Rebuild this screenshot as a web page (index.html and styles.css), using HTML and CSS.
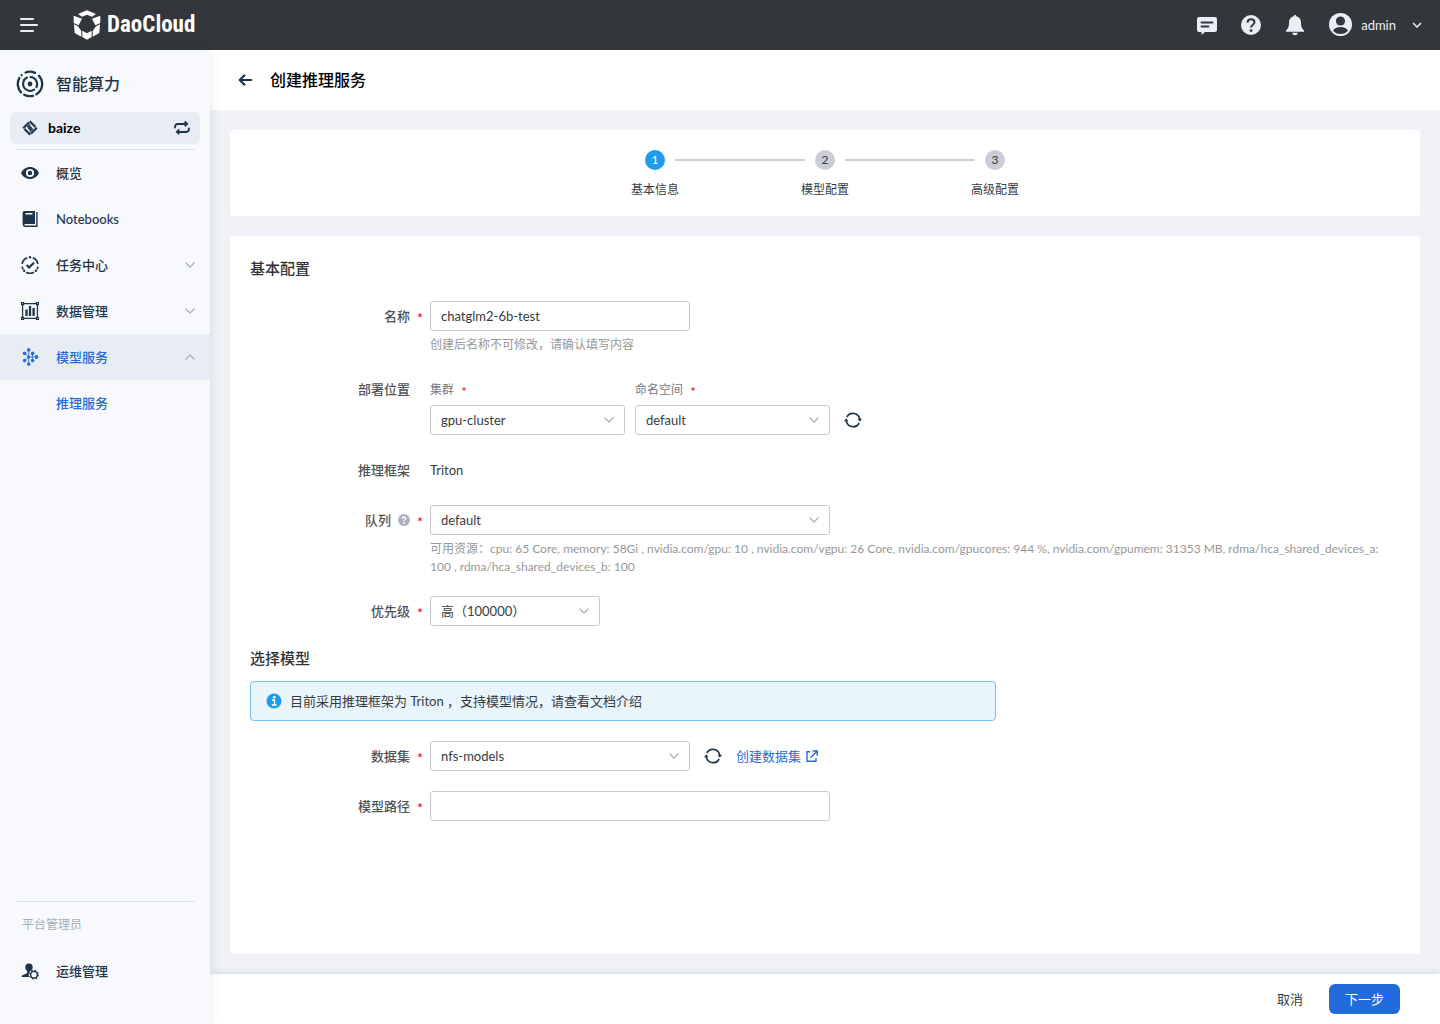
FILE: index.html
```html
<!DOCTYPE html>
<html lang="zh-CN">
<head>
<meta charset="utf-8">
<meta name="viewport" content="width=device-width, initial-scale=1">
<title>创建推理服务 - DaoCloud</title>
<link rel="stylesheet" href="styles.css">
</head>
<body>
<header class="topbar">
  <button class="icon-btn menu-btn" type="button" aria-label="菜单">
    <svg width="18" height="16" viewBox="0 0 18 16" fill="none" stroke="currentColor" stroke-width="2" stroke-linecap="round"><path d="M1 2h12M1 8h16M1 14h12"/></svg>
  </button>
  <a class="brand" href="#">
    <svg width="28" height="30" viewBox="0 0 84 90" fill="currentColor" aria-hidden="true">
      <path d="M42 1 69 12 57 20 42 14 27 20 15 12Z"/>
      <path d="M2 17 27 26 17 46 2 39Z"/><path d="M82 17 57 26 67 46 82 39Z"/>
      <path d="M3 43 15 49 25 63V80L5 69Z"/><path d="M81 43 69 49 59 63V80L79 69Z"/>
      <path d="M28 62 42 70 56 62V81L42 89 28 81Z"/>
    </svg>
    <span class="brand-name">DaoCloud</span>
  </a>
  <nav class="top-actions" aria-label="工具">
    <button class="icon-btn" type="button" aria-label="消息">
      <svg width="20" height="20" viewBox="0 0 20 20"><path fill="currentColor" d="M2 2h16a2 2 0 0 1 2 2v11a2 2 0 0 1-2 2H8l-3.500 3V17H2a2 2 0 0 1-2-2V4a2 2 0 0 1 2-2Z"/><path d="M4.500 7.500h11M4.500 11.500h7" stroke="#33363b" stroke-width="1.800" stroke-linecap="round"/></svg>
    </button>
    <button class="icon-btn" type="button" aria-label="帮助">
      <svg width="20" height="20" viewBox="0 0 20 20"><circle cx="10" cy="10" r="10" fill="currentColor"/><path d="M6.500 7.600c.1-2.100 1.500-3.300 3.500-3.300s3.500 1.200 3.500 3c0 2.400-3.500 2.500-3.500 5.200" fill="none" stroke="#33363b" stroke-width="2"/><circle cx="10" cy="15.600" r="1.400" fill="#33363b"/></svg>
    </button>
    <button class="icon-btn" type="button" aria-label="通知">
      <svg width="20" height="22" viewBox="0 0 20 22" fill="currentColor"><path d="M10 1c.8 0 1.300.5 1.300 1.300 3 .7 4.700 3 4.700 6.200 0 4.500 1 6.200 3 7.800v1.500H1v-1.500c2-1.600 3-3.300 3-7.800 0-3.200 1.700-5.500 4.700-6.200C8.700 1.500 9.200 1 10 1ZM7.200 18.800h5.600C12.500 20.500 11.500 21.300 10 21.300s-2.500-.8-2.800-2.500Z"/></svg>
    </button>
    <button class="icon-btn user-btn" type="button">
      <svg width="24" height="24" viewBox="0 0 24 24"><circle cx="11.500" cy="11.500" r="11.500" fill="currentColor"/><circle cx="11.500" cy="8" r="4.600" fill="#33363b"/><path d="M4.100 17.700c1-2.200 3.800-3.600 7.400-3.600s6.400 1.400 7.400 3.600c-1.700 2-4.300 3.300-7.400 3.300s-5.700-1.300-7.400-3.300Z" fill="#33363b"/></svg>
      <span class="user-name">admin</span>
      <svg width="10" height="6" viewBox="0 0 10 6" fill="none" stroke="currentColor" stroke-width="1.500"><path d="m1 1 4 4 4-4"/></svg>
    </button>
  </nav>
</header>

<div class="shell">
  <aside class="sidebar">
    <div class="product">
      <svg width="28" height="28" viewBox="0 0 28 28" fill="none" stroke="currentColor" stroke-linecap="round" aria-hidden="true">
        <circle cx="14" cy="14" r="2.400" fill="currentColor" stroke="none"/>
        <path stroke-width="2.300" d="M9.600 2.500A12.200 12.200 0 0 1 19 2.900M23 5.800A12.200 12.200 0 0 1 20.500 24.300M17 25.800A12.200 12.200 0 0 1 8.200 24.700M5 22.300A12.200 12.200 0 0 1 3.400 8M5.600 5.200v.1"/>
        <path stroke-width="2.100" d="M14.500 7A7.100 7.100 0 0 1 20.400 17.200M18.200 19.700A7.100 7.100 0 1 1 11 7.500"/>
      </svg>
      <span>智能算力</span>
    </div>
    <button class="workspace" type="button">
      <svg width="16" height="16" viewBox="0 0 16 16" fill="none" stroke="currentColor" stroke-width="2.200" aria-hidden="true"><path d="M1.200 8.300 7 2.500M7.700 1.200l5.800 5.800M14.800 7.700 9 13.500M8.300 14.800 2.500 9"/><path d="M5.200 7.300 8 4.500M10.800 8.700 8 11.500" stroke-width="1.400"/><path d="m8 5.800 2.200 2.200L8 10.200 5.800 8Z" fill="currentColor" stroke-width=".6"/></svg>
      <span class="workspace-name">baize</span>
      <svg width="16" height="14" viewBox="0 0 16 14" fill="none" stroke="currentColor" stroke-width="1.800" stroke-linecap="round" aria-hidden="true"><path d="M1 6.500Q1 3 4 3h8M15 7.500Q15 11 12 11H4"/><path d="M11 .6v4.800L13.800 3ZM5 8.600v4.800L2.200 11Z" fill="currentColor" stroke-width="1" stroke-linejoin="round"/></svg>
    </button>
    <nav class="nav" aria-label="主导航">
      <a class="nav-item" href="#">
        <svg width="18" height="18" viewBox="0 0 18 18"><path fill="currentColor" fill-rule="evenodd" d="M9 3c4 0 7.300 2.500 9 6-1.700 3.500-5 6-9 6s-7.300-2.500-9-6c1.700-3.500 5-6 9-6Zm0 1.900a4.100 4.100 0 1 0 0 8.200 4.100 4.100 0 0 0 0-8.200Zm0 1.900a2.200 2.200 0 1 1 0 4.400 2.200 2.200 0 0 1 0-4.400Z"/></svg>
        <span class="nav-text">概览</span>
      </a>
      <a class="nav-item" href="#">
        <svg width="18" height="18" viewBox="0 0 18 18"><path fill="currentColor" fill-rule="evenodd" d="M3.500 1H14v13H4.200a.8.800 0 0 0 0 1.600H15.200V2H16.600v15H4a2.500 2.500 0 0 1-2.400-2.500V3A2 2 0 0 1 3.500 1Zm1 2v1.600h7V3Z"/></svg>
        <span class="nav-text">Notebooks</span>
      </a>
      <a class="nav-item" href="#">
        <svg width="18" height="18" viewBox="0 0 18 18" fill="none" stroke="currentColor"><path d="M11.800 1.700A8 8 0 0 1 16.900 8M16.900 10.600a8 8 0 0 1-1 2.700M12.900 16.300a8 8 0 0 1-7.800 0M2.100 13.300a8 8 0 0 1-1-2.700M1.100 8A8 8 0 0 1 6.200 1.700" stroke-width="1.700"/><g fill="currentColor" stroke="none"><circle cx="9" cy="1.200" r="1.200"/><circle cx="14.900" cy="14.700" r="1.200"/><circle cx="3.100" cy="14.700" r="1.200"/></g><path d="m5.600 9 2.500 2.500L13 6.700" stroke-width="2.200"/></svg>
        <span class="nav-text">任务中心</span>
        <svg class="caret" width="10" height="6" viewBox="0 0 10 6"><path d="M.5.500 5 5 9.500.5"/></svg>
      </a>
      <a class="nav-item" href="#">
        <svg width="18" height="18" viewBox="0 0 18 18" fill="none" stroke="currentColor" stroke-width="1.200"><path d="M3 1.600h12M3 16.400h12M1.600 3v12M16.400 3v12"/><path d="M.6.600h2v2h-2ZM15.400.600h2v2h-2ZM.6 15.400h2v2h-2ZM15.400 15.400h2v2h-2Z"/><path d="M5.500 7.500V14M9 4v10M12.600 6v8" stroke-width="2.300"/></svg>
        <span class="nav-text">数据管理</span>
        <svg class="caret" width="10" height="6" viewBox="0 0 10 6"><path d="M.5.500 5 5 9.500.5"/></svg>
      </a>
      <a class="nav-item active" href="#">
        <svg width="18" height="18" viewBox="0 0 18 18" fill="currentColor"><path d="M7.700 2v14M4 5.500l3.700 3.500L4 12.500M11.400 5.500v7M7.700 9h7.500" stroke="currentColor" stroke-width=".9" fill="none"/><circle cx="7.700" cy="1.900" r="1.800"/><circle cx="3.600" cy="5.400" r="1.800"/><circle cx="11.600" cy="5.400" r="1.800"/><circle cx="7.700" cy="9" r="1.500"/><circle cx="15.500" cy="9" r="1.900"/><circle cx="3.600" cy="12.600" r="1.800"/><circle cx="11.600" cy="12.600" r="1.800"/><circle cx="7.700" cy="16.100" r="1.800"/></svg>
        <span class="nav-text">模型服务</span>
        <svg class="caret" width="10" height="6" viewBox="0 0 10 6"><path d="M.5 5.500 5 1l4.500 4.500"/></svg>
      </a>
      <a class="nav-item nav-sub" href="#"><span class="nav-text">推理服务</span></a>
    </nav>
    <div class="admin">
      <p class="admin-title">平台管理员</p>
      <a class="nav-item" href="#">
        <svg width="18" height="18" viewBox="0 0 18 18"><path fill="currentColor" d="M8 1.500a3.700 3.700 0 0 1 3.700 3.800c0 1-.3 2-1 2.900-1.800.8-3 2.500-3 4.500 0 .9.200 1.700.6 2.400H.7v-1.400c1-.9 5-1.800 5.400-3V9C5 8.300 4.300 6.900 4.300 5.300A3.700 3.700 0 0 1 8 1.500Z"/><circle cx="13" cy="12.700" r="3.300" fill="none" stroke="currentColor" stroke-width="1.400"/><circle cx="13" cy="12.700" r="4.300" fill="none" stroke="currentColor" stroke-width="1.200" stroke-dasharray="1.600 1.777"/></svg>
        <span class="nav-text">运维管理</span>
      </a>
    </div>
  </aside>

  <main class="main">
    <div class="page-head">
      <a class="back" href="#" aria-label="返回"><svg width="14" height="12" viewBox="0 0 14 12" fill="none" stroke="currentColor" stroke-width="2.200"><path d="M14 6H2M7 .8 1.800 6 7 11.200"/></svg></a>
      <h1 class="page-title">创建推理服务</h1>
    </div>

    <div class="content">
      <section class="card steps-card">
        <ol class="steps">
          <li class="step current"><span class="step-num">1</span><span class="step-name">基本信息</span></li>
          <li class="step-line" aria-hidden="true"></li>
          <li class="step"><span class="step-num">2</span><span class="step-name">模型配置</span></li>
          <li class="step-line" aria-hidden="true"></li>
          <li class="step"><span class="step-num">3</span><span class="step-name">高级配置</span></li>
        </ol>
      </section>

      <form class="card form-card" id="service-form">
        <h2 class="section-title">基本配置</h2>
        <div class="rows">
          <div class="row">
            <label class="label required" for="name">名称</label>
            <div class="field">
              <input class="control w-260" id="name" type="text" value="chatglm2-6b-test">
              <p class="hint">创建后名称不可修改，请确认填写内容</p>
            </div>
          </div>
          <div class="row">
            <span class="label">部署位置</span>
            <div class="field inline bottom">
              <div class="sub-field">
                <label class="sub-label required" for="cluster">集群</label>
                <select class="control w-195" id="cluster"><option>gpu-cluster</option></select>
              </div>
              <div class="sub-field">
                <label class="sub-label required" for="namespace">命名空间</label>
                <select class="control w-195" id="namespace"><option>default</option></select>
              </div>
              <button class="refresh" type="button" aria-label="刷新"><svg width="18" height="16" viewBox="0 0 18 16" fill="none" stroke="currentColor" stroke-width="1.700"><path d="M2.900 5A6.800 6.800 0 0 1 15.700 7.500M15.100 11A6.800 6.800 0 0 1 2.300 8.500"/><path d="M0 9.200 2.200 6.200 4.400 9.200ZM13.600 6.800H18L15.800 9.800Z" fill="currentColor" stroke="none"/></svg></button>
            </div>
          </div>
          <div class="row">
            <span class="label">推理框架</span>
            <div class="field"><span class="plain">Triton</span></div>
          </div>
          <div class="row">
            <label class="label required" for="queue">队列
              <svg class="tip" width="12" height="12" viewBox="0 0 12 12" aria-hidden="true"><circle cx="6" cy="6" r="6" fill="#abb1bd"/><path d="M4.200 4.700c0-1.100.7-1.700 1.800-1.700s1.800.6 1.800 1.500C7.800 5.800 6 5.800 6 7.300" fill="none" stroke="#fff" stroke-width="1.300"/><circle cx="6" cy="9" r=".9" fill="#fff"/></svg>
            </label>
            <div class="field">
              <select class="control w-400" id="queue"><option>default</option></select>
              <p class="hint">可用资源：cpu: 65 Core, memory: 58Gi , nvidia.com/gpu: 10 , nvidia.com/vgpu: 26 Core, nvidia.com/gpucores: 944 %, nvidia.com/gpumem: 31353 MB, rdma/hca_shared_devices_a: 100 , rdma/hca_shared_devices_b: 100</p>
            </div>
          </div>
          <div class="row">
            <label class="label required" for="priority">优先级</label>
            <div class="field">
              <select class="control w-170" id="priority"><option>高（100000）</option></select>
            </div>
          </div>
        </div>

        <h2 class="section-title">选择模型</h2>
        <div class="alert" role="note">
          <svg width="16" height="16" viewBox="0 0 16 16" aria-hidden="true"><circle cx="8" cy="8" r="7.500" fill="#1e9bea"/><circle cx="8.200" cy="4.300" r="1.300" fill="#fff"/><path d="M6 7h2.500v5M5.800 12h4.800" fill="none" stroke="#fff" stroke-width="1.500"/></svg>
          <span>目前采用推理框架为 Triton ，支持模型情况，请查看文档介绍</span>
        </div>
        <div class="rows">
          <div class="row">
            <label class="label required" for="dataset">数据集</label>
            <div class="field inline">
              <select class="control w-260" id="dataset"><option>nfs-models</option></select>
              <button class="refresh" type="button" aria-label="刷新"><svg width="18" height="16" viewBox="0 0 18 16" fill="none" stroke="currentColor" stroke-width="1.700"><path d="M2.900 5A6.800 6.800 0 0 1 15.700 7.500M15.100 11A6.800 6.800 0 0 1 2.300 8.500"/><path d="M0 9.200 2.200 6.200 4.400 9.200ZM13.600 6.800H18L15.800 9.800Z" fill="currentColor" stroke="none"/></svg></button>
              <a class="link" href="#">创建数据集<svg width="12" height="12" viewBox="0 0 12 12" fill="none" stroke="currentColor" stroke-width="1.400"><path d="M4 1.700H1V11.300H10V8M6.500 1H11.300V5.800M11 1.300 4.500 7.800"/></svg></a>
            </div>
          </div>
          <div class="row">
            <label class="label required" for="path">模型路径</label>
            <div class="field"><input class="control w-400" id="path" type="text"></div>
          </div>
        </div>
      </form>
    </div>

    <footer class="actions">
      <button class="btn btn-text" type="button">取消</button>
      <button class="btn btn-primary" type="submit" form="service-form">下一步</button>
    </footer>
  </main>
</div>
</body>
</html>
```
FILE: styles.css
```css
* {
  box-sizing: border-box;
}

body {
  margin: 0;
  min-height: 100vh;
  display: flex;
  flex-direction: column;
  background: #f0f2f7;
  color: #373b40;
  font: 13px/20px Lato, "Noto Sans CJK SC", sans-serif;
}

h1, h2, p, ol {
  margin: 0;
  padding: 0;
}

a {
  color: inherit;
  text-decoration: none;
}

svg {
  flex: none;
  display: block;
}

button, input, select {
  font: inherit;
  color: inherit;
}

button {
  padding: 0;
  border: 0;
  background: none;
  cursor: pointer;
}

/* Top bar */
.topbar {
  display: flex;
  align-items: center;
  height: 50px;
  padding: 0 18px 0 20px;
  background: #33363b;
  color: #e9eef6;
}

.icon-btn {
  display: flex;
  align-items: center;
}

.brand {
  display: flex;
  align-items: center;
  gap: 6px;
  margin-left: 35px;
  color: #fff;
}

.brand-name {
  font: bold 23px/28px "Roboto Condensed", Roboto, sans-serif;
}

.top-actions {
  display: flex;
  align-items: center;
  gap: 24px;
  margin-left: auto;
}

.user-name {
  margin: 0 16px 0 8px;
}

/* Layout */
.shell {
  flex: 1;
  display: flex;
}

.sidebar {
  flex: none;
  display: flex;
  flex-direction: column;
  width: 210px;
  padding-bottom: 30px;
  background: #f7f9fd;
  color: #1f3449;
  box-shadow: 0 0 10px rgba(31, 52, 73, 0.12);
  z-index: 1;
}

.product {
  display: flex;
  align-items: center;
  gap: 12px;
  padding: 20px 16px 14px;
  font-size: 16px;
  line-height: 28px;
  font-weight: 500;
}

.workspace {
  display: flex;
  align-items: center;
  height: 32px;
  margin: 0 10px 5px;
  padding: 0 10px 0 12px;
  border-radius: 6px;
  background: #e8edf5;
  text-align: left;
}

.workspace-name {
  flex: 1;
  margin-left: 10px;
  color: #000;
  font-size: 14px;
  font-weight: bold;
}

.nav::before,
.admin::before {
  content: "";
  display: block;
  height: 1px;
  margin: 0 15px;
  background: #dfe3ea;
}

.nav-item {
  display: flex;
  align-items: center;
  gap: 17px;
  height: 46px;
  padding: 0 15px 0 21px;
  font-weight: 500;
}

.nav-text {
  flex: 1;
}

.nav-item.active,
.nav-sub {
  color: #266cd9;
}

.nav-item.active {
  background: #e8edf5;
}

.nav-sub {
  padding-left: 56px;
}

.caret {
  fill: none;
  stroke: #abb1bd;
  stroke-width: 1.3;
}

.admin {
  margin-top: auto;
}

.admin-title {
  padding: 13px 22px;
  color: #a5adb8;
  font-size: 12px;
}

.main {
  flex: 1;
  min-width: 0;
  display: flex;
  flex-direction: column;
}

.page-head {
  display: flex;
  align-items: center;
  gap: 18px;
  height: 60px;
  padding: 0 28px;
  background: #fff;
}

.back {
  color: #1f3449;
}

.page-title {
  color: #000;
  font-size: 16px;
  line-height: 24px;
  font-weight: 500;
}

.content {
  flex: 1;
  display: flex;
  flex-direction: column;
  gap: 20px;
  padding: 20px;
}

.card {
  border-radius: 4px;
  background: #fff;
}

/* Steps */
.steps-card {
  padding: 20px 20px 16px;
}

.steps {
  display: flex;
  justify-content: center;
  list-style: none;
}

.step {
  display: flex;
  flex-direction: column;
  align-items: center;
  gap: 10px;
  width: 40px;
  font-size: 12px;
  white-space: nowrap;
}

.step-num {
  width: 20px;
  border-radius: 50%;
  background: #cacdd8;
  text-align: center;
}

.current .step-num {
  background: #1e9bea;
  color: #fff;
}

.step-line {
  width: 130px;
  height: 2px;
  margin-top: 9px;
  background: #cacdd8;
}

/* Form */
.form-card {
  flex: 1;
  padding: 20px;
}

.section-title {
  color: #303236;
  font-size: 15px;
  line-height: 25px;
  font-weight: 500;
}

.rows {
  display: flex;
  flex-direction: column;
  gap: 20px;
  padding: 20px 0;
}

.row {
  display: flex;
}

.label {
  flex: none;
  display: flex;
  align-items: center;
  justify-content: flex-end;
  width: 180px;
  height: 30px;
  padding-right: 20px;
  color: #505357;
  font-weight: 500;
}

.label.required {
  padding-right: 0;
}

.required::after {
  content: "*";
  width: 20px;
  padding-top: 4px;
  color: #e6212a;
  font-weight: bold;
  text-align: center;
}

.tip {
  margin-left: 7px;
}

.field {
  flex: 1;
  min-width: 0;
}

.inline {
  display: flex;
  align-items: center;
  gap: 10px;
}

.bottom {
  align-items: flex-end;
}

.sub-label {
  display: flex;
  align-items: center;
  height: 31px;
  color: #77797d;
  font-size: 12px;
}

.control {
  display: block;
  height: 30px;
  padding: 0 10px;
  border: 1px solid #c5c9d6;
  border-radius: 3px;
  background-color: #fff;
  outline: 0;
}

select.control {
  appearance: none;
  background-image: url("data:image/svg+xml,%3Csvg xmlns='http://www.w3.org/2000/svg' width='10' height='6' fill='none' stroke='%23abb1bd' stroke-width='1.3'%3E%3Cpath d='M.5.5 5 5 9.500.5'/%3E%3C/svg%3E");
  background-repeat: no-repeat;
  background-position: right 10px center;
}

.w-170 { width: 170px; }
.w-195 { width: 195px; }
.w-260 { width: 260px; }
.w-400 { width: 400px; }

.hint {
  margin-top: 5px;
  color: #979899;
  font-size: 12px;
  line-height: 18px;
}

.plain {
  line-height: 30px;
}

.refresh {
  display: flex;
  align-items: center;
  height: 30px;
  padding: 0 4px;
  color: #1f3449;
}

.link {
  display: flex;
  align-items: center;
  gap: 5px;
  color: #266cd9;
}

.alert {
  display: flex;
  align-items: center;
  gap: 8px;
  max-width: 746px;
  height: 40px;
  margin-top: 10px;
  padding: 0 15px;
  border: 1px solid #78c2f2;
  border-radius: 4px;
  background: #e9f5fd;
}

/* Footer */
.actions {
  display: flex;
  align-items: center;
  justify-content: flex-end;
  gap: 10px;
  height: 50px;
  padding: 0 40px;
  background: #fff;
  box-shadow: 0 0 8px rgba(31, 52, 73, 0.16);
}

.btn {
  height: 30px;
  padding: 0 16px;
  border-radius: 6px;
}

.btn-primary {
  background: #226bdb;
  color: #fff;
}
```
